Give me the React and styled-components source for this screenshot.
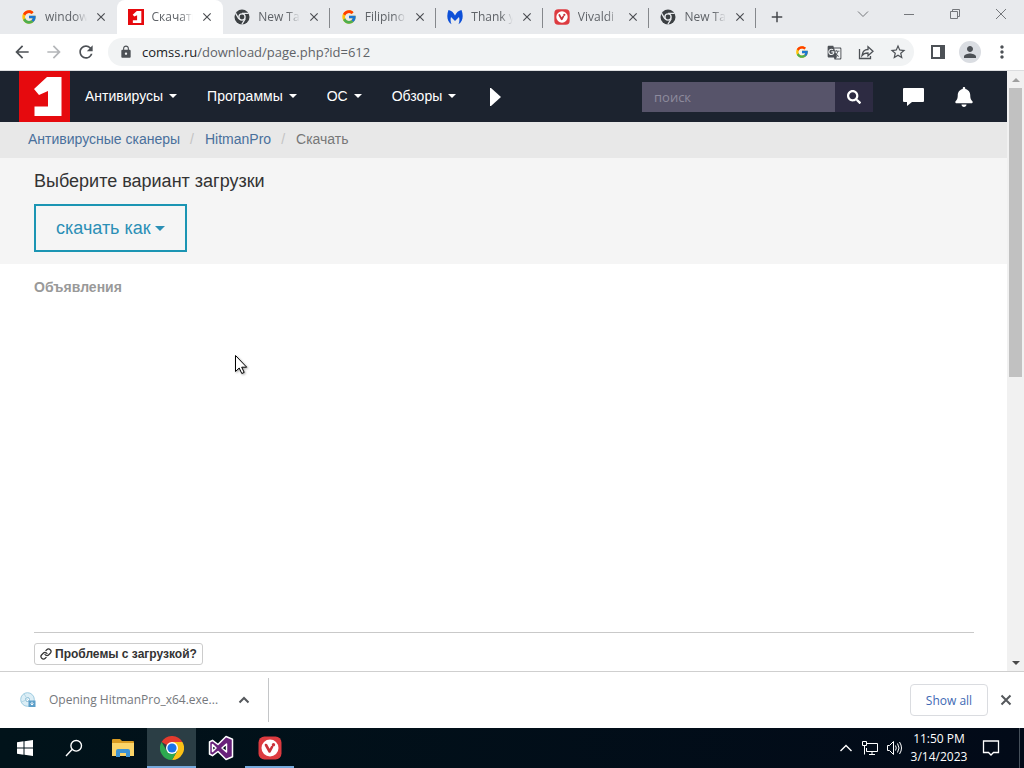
import React from "react";
import styled, { createGlobalStyle, css } from "styled-components";
import { FcGoogle } from "react-icons/fc";
import { FaSearch, FaBell } from "react-icons/fa";
import { MdLock, MdStarBorder, MdGTranslate, MdArrowBack, MdArrowForward, MdRefresh, MdPerson, MdMoreVert, MdClose, MdAdd } from "react-icons/md";
import { Link as LinkIcon } from "lucide-react";

const uiFont = `"Open Sans", "Noto Sans", sans-serif`;
const webFont = `"Liberation Sans", Arial, sans-serif`;

const GlobalStyle = createGlobalStyle`
  *, *::before, *::after { box-sizing: border-box; }
  body { margin: 0; background: #fff; font-family: ${uiFont}; }
  button, input { font: inherit; color: inherit; border: 0; padding: 0; margin: 0; background: none; border-radius: 0; }
  button { cursor: pointer; }
  a { text-decoration: none; color: inherit; }
  svg { display: block; flex: none; }
`;

const Screen = styled.div`
  display: flex;
  flex-direction: column;
  height: 100vh;
  min-height: 480px;
  position: relative;
  overflow: hidden;
`;

/* Browser chrome */
const TabStrip = styled.header`
  display: flex;
  height: 34px;
  flex: none;
  padding-left: 10px;
  background: #e8eaed;
`;

const Tabs = styled.div`
  display: grid;
  grid-template-columns: repeat(7, minmax(0, 1fr));
  flex: 0 1 746px;
`;

const TabItem = styled.div`
  display: flex;
  align-items: center;
  padding: 0 8px 0 11px;
  position: relative;
  ${(p) => p.$active && css`
    background: #fff;
    border-radius: 8px 8px 0 0;
  `}
  ${(p) => p.$divided && css`
    &::after {
      content: "";
      position: absolute;
      right: 0;
      top: 8px;
      width: 1px;
      height: 20px;
      background: #85888c;
    }
  `}
`;

const TabButton = styled.button`
  display: flex;
  align-items: center;
  gap: 8px;
  flex: 1;
  min-width: 0;
  text-align: left;
`;

const TabTitle = styled.span`
  flex: 1;
  min-width: 0;
  overflow: hidden;
  white-space: nowrap;
  font-size: 12px;
  line-height: 18px;
  color: #5f6368;
  mask-image: linear-gradient(to right, #000 70%, transparent 100%);
`;

const TabClose = styled.button`
  display: grid;
  place-items: center;
  width: 16px;
  height: 16px;
  margin-left: 6px;
  color: #4b4e52;
`;

const NewTab = styled.button`
  display: grid;
  place-items: center;
  width: 28px;
  margin-left: 7px;
  color: #45484c;
`;

const WindowControls = styled.div`
  display: flex;
  margin-left: auto;
  height: 28px;
`;

const WindowButton = styled.button`
  display: grid;
  place-items: center;
  width: 46px;
  color: #74777b;
`;

const Toolbar = styled.div`
  display: flex;
  align-items: center;
  flex: none;
  height: 37px;
  padding: 0 6px;
  background: #fff;
  border-bottom: 1px solid #dcdddf;
`;

const ToolButton = styled.button`
  display: grid;
  place-items: center;
  width: 32px;
  height: 28px;
  color: ${(p) => (p.$muted ? "#b4b6b9" : "#4d5156")};
`;

const Omnibox = styled.div`
  display: flex;
  align-items: center;
  flex: 1;
  min-width: 0;
  height: 28px;
  margin: 0 8px 0 6px;
  padding-left: 11px;
  border-radius: 14px;
  background: #f1f3f4;
`;

const Address = styled.button`
  flex: 1;
  min-width: 0;
  margin-left: 9px;
  text-align: left;
  font-size: 13px;
  line-height: 20px;
  color: #5f6368;
  white-space: nowrap;
  b { font-weight: 400; color: #202124; }
`;

const Avatar = styled.span`
  display: grid;
  place-items: center;
  width: 22px;
  height: 22px;
  border-radius: 50%;
  background: #dadde2;
`;

/* Web page */
const Viewport = styled.div`
  display: flex;
  flex: 1;
  min-height: 0;
`;

const Page = styled.div`
  display: flex;
  flex-direction: column;
  flex: 1;
  min-width: 0;
  font-family: ${webFont};
  color: #333;
  overflow: hidden;
`;

const Navbar = styled.nav`
  display: flex;
  align-items: center;
  flex: none;
  height: 51px;
  padding: 0 33px 0 19px;
  background: #1c232f;
`;

const Logo = styled.a`
  display: block;
  width: 51px;
  height: 51px;
`;

const NavButton = styled.button`
  display: flex;
  align-items: center;
  gap: 6px;
  padding: 0 15px 2px;
  font-size: 14px;
  line-height: 20px;
  color: #fff;
`;

const Caret = styled.span`
  border-top: ${(p) => p.$size || 4}px solid currentColor;
  border-left: ${(p) => p.$size || 4}px solid transparent;
  border-right: ${(p) => p.$size || 4}px solid transparent;
`;

const MoreButton = styled.button`
  margin-left: 19px;
  color: #fff;
`;

const Search = styled.form`
  display: flex;
  height: 30px;
  margin-left: auto;
`;

const SearchInput = styled.input`
  width: 193px;
  padding: 0 12px;
  background: #57546a;
  color: #fff;
  font-family: ${uiFont};
  font-size: 13px;
  outline: none;
  &::placeholder { color: #8e8b9d; opacity: 1; }
`;

const SearchButton = styled.button`
  display: grid;
  place-items: center;
  width: 38px;
  background: #2d2b42;
  color: #fff;
`;

const NavIcon = styled.button`
  margin-left: 30px;
  color: #fff;
`;

const Breadcrumbs = styled.ol`
  display: flex;
  align-items: center;
  flex: none;
  height: 36px;
  margin: 0;
  padding: 0 28px 2px;
  list-style: none;
  background: #e8e8e8;
  font-size: 14px;
  line-height: 20px;
  color: #777;
`;

const Crumb = styled.li`
  a { color: #4a709c; }
  & + &::before {
    content: "/";
    padding: 0 11px 0 10px;
    color: #c4c4c4;
  }
`;

const Hero = styled.section`
  flex: none;
  padding: 12px 34px;
  background: #f5f5f5;
`;

const HeroTitle = styled.h1`
  margin: 0 0 12px;
  font-size: 18px;
  font-weight: 400;
  line-height: 22px;
`;

const DownloadButton = styled.button`
  display: flex;
  align-items: center;
  gap: 4px;
  height: 48px;
  padding: 0 20px;
  border: 2px solid #1b95b3;
  color: #2b8fb5;
  font-size: 18px;
  line-height: 24px;
`;

const Ads = styled.section`
  flex: 1;
  min-height: 0;
  margin: 0 33px 0 34px;
  padding-top: 13px;
  border-bottom: 1px solid #c9c9c9;
`;

const AdsTitle = styled.h2`
  margin: 0;
  font-size: 14px;
  line-height: 20px;
  color: #999;
`;

const Help = styled.div`
  flex: none;
  padding: 10px 34px 6px;
`;

const HelpButton = styled.button`
  display: flex;
  align-items: center;
  gap: 3px;
  height: 22px;
  padding: 0 5px;
  border: 1px solid #ccc;
  border-radius: 3px;
  font-size: 12px;
  font-weight: 700;
  line-height: 18px;
  color: #333;
`;

const Scrollbar = styled.div`
  display: flex;
  flex-direction: column;
  align-items: center;
  width: 17px;
  background: #f1f1f1;
`;

const ScrollArrow = styled.button`
  display: grid;
  place-items: center;
  width: 17px;
  height: 17px;
  color: ${(p) => (p.$muted ? "#a0a0a0" : "#484848")};
`;

const ScrollTrack = styled.div`
  flex: 1;
  width: 13px;
`;

const ScrollThumb = styled.div`
  height: 51%;
  background: #c1c1c1;
`;

/* Download shelf */
const Shelf = styled.section`
  display: flex;
  align-items: center;
  flex: none;
  height: 57px;
  padding: 0 8px 0 20px;
  border-top: 1px solid #cfcfcf;
  background: #fff;
`;

const DownloadItem = styled.div`
  display: flex;
  align-items: center;
  height: 44px;
  padding-right: 14px;
  border-right: 1px solid #c4c6c8;
`;

const DownloadName = styled.button`
  display: flex;
  align-items: center;
  gap: 13px;
  font-size: 12px;
  line-height: 20px;
  color: #75787c;
  white-space: nowrap;
`;

const ShelfIcon = styled.button`
  display: grid;
  place-items: center;
  width: 20px;
  height: 20px;
  margin-left: 16px;
  color: #55585c;
`;

const ShowAll = styled.button`
  height: 32px;
  width: 78px;
  margin-left: auto;
  border: 1px solid #dadce0;
  border-radius: 4px;
  font-size: 12px;
  font-weight: 500;
  color: #4069b4;
`;

const ShelfClose = styled(ShelfIcon)`
  margin-left: 8px;
`;

/* Taskbar */
const Taskbar = styled.footer`
  display: flex;
  flex: none;
  height: 40px;
  background: linear-gradient(to right, #01131a, #020a18);
  color: #fff;
`;

const TaskButton = styled.button`
  display: grid;
  place-items: center;
  width: 49px;
  height: 40px;
  ${(p) => p.$running && css`box-shadow: inset 0 -2px #76a9dc;`}
  ${(p) => p.$active && css`background: #2b3e45;`}
`;

const Tray = styled.div`
  display: flex;
  align-items: center;
  margin-left: auto;
  padding-right: 4px;
`;

const TrayButton = styled.button`
  display: grid;
  place-items: center;
  width: 24px;
  height: 40px;
`;

const Clock = styled.button`
  width: 66px;
  font-size: 12px;
  line-height: 18px;
  text-align: center;
  white-space: nowrap;
`;

const Notifications = styled.button`
  display: grid;
  place-items: center;
  width: 38px;
  height: 40px;
`;

const DesktopEdge = styled.button`
  width: 1px;
  height: 40px;
  margin-left: 9px;
  background: #46505b;
`;

const Pointer = styled.svg`
  position: absolute;
  left: 235px;
  top: 355px;
  filter: drop-shadow(1px 1px 1px rgba(0, 0, 0, 0.35));
`;

function ComssLogo({ size = 16 }) {
  return (
    <svg width={size} height={size} viewBox="0 0 51 51" aria-hidden="true">
      <path fill="#e60a0e" d="M0 0h51v51H0z" />
      <path fill="#fff" d="M28 6h14.500v39h-27v-9.500H29V20l-9 4-5-6z" />
    </svg>
  );
}

function ChromeGray() {
  return (
    <svg width="16" height="16" viewBox="0 0 16 16" aria-hidden="true">
      <circle cx="8" cy="8" r="7.5" fill="#3c4043" />
      <circle cx="8" cy="8" r="3.1" fill="#3c4043" stroke="#e8eaed" strokeWidth="1.4" />
      <path d="M8 4.4h6.6M4.9 9.9L1.5 4.2M11.1 9.8l-3.3 5.7" stroke="#e8eaed" strokeWidth="1.3" />
    </svg>
  );
}

function ChromeColor() {
  return (
    <svg width="24" height="24" viewBox="0 0 24 24" aria-hidden="true">
      <path fill="#e33b2e" d="M12 12L1.6 6A12 12 0 0 1 22.4 6z" />
      <path fill="#fbc116" d="M12 6h10.4A12 12 0 0 1 12 24l5.2-9z" />
      <path fill="#2da94f" d="M12 24A12 12 0 0 1 1.6 6l5.2 9L12 18l5.2-3z" />
      <circle cx="12" cy="12" r="6" fill="#fff" />
      <circle cx="12" cy="12" r="4.6" fill="#1a73e8" />
    </svg>
  );
}

function Malwarebytes() {
  return (
    <svg width="16" height="16" viewBox="0 0 16 16" aria-hidden="true">
      <path fill="#0d50d8" d="M1.500 1C4.500 1.500 6.500 3.500 8 6.500 9.500 3.500 11.500 1.500 14.500 1 16.500 6 16.300 12 11.500 15.300c1-2.300 1.200-5 .5-7.300L8 12 4 8c-.7 2.300-.5 5 .5 7.300C-.3 12-.5 6 1.500 1z" />
    </svg>
  );
}

function Vivaldi({ size = 16 }) {
  return (
    <svg width={size} height={size} viewBox="0 0 24 24" aria-hidden="true">
      <rect x="0.500" y="0.500" width="23" height="23" rx="6" fill="#dd3b40" />
      <circle cx="12" cy="12" r="8.500" fill="#fff" />
      <path d="M8 9l3.600 6.500L14 11" fill="none" stroke="#c9323a" strokeWidth="2.600" strokeLinecap="round" strokeLinejoin="round" />
      <circle cx="15.500" cy="8.800" r="1.700" fill="#c9323a" />
    </svg>
  );
}

function VisualStudio() {
  return (
    <svg width="26" height="26" viewBox="0 0 26 26" aria-hidden="true">
      <path fill="#68217a" stroke="#fff" strokeWidth="1.500" strokeLinejoin="round" fillRule="evenodd" d="M18 1.500l6.500 2.700v17.600L18 24.500l-8-8L4.500 20.700 1.500 19V7l3-1.700L10 9.500zM18.500 9L14 13l4.500 4zM4.500 9.500v7L8 13z" />
    </svg>
  );
}

function Folder() {
  return (
    <svg width="22" height="20" viewBox="0 0 22 20" aria-hidden="true">
      <path fill="#d99b22" d="M0 2q0-1 1-1h7l2 2h11q1 0 1 1v4H0z" />
      <path fill="#fbd468" d="M0 5h22v13H0z" />
      <path fill="#3d93d3" d="M4 19v-6q0-2 2-2h10q2 0 2 2v6h-4v-4H8v4z" />
    </svg>
  );
}

function Installer() {
  return (
    <svg width="16" height="16" viewBox="0 0 16 16" aria-hidden="true">
      <circle cx="7.500" cy="7.500" r="6.800" fill="#dceef6" stroke="#9ccbe0" />
      <circle cx="7.500" cy="7.500" r="2" fill="#fff" stroke="#85b9d4" />
      <path d="M7.500 7.500L4 1.700M7.500 7.500L1.500 10" stroke="#b3d7e6" />
      <path fill="#5c9fc9" d="M8.500 8.500h7V15h-7z" />
      <path d="M12 9.800v3M10.500 11.500l1.500 1.600 1.500-1.600" stroke="#fff" fill="none" />
    </svg>
  );
}

function Glyph({ d, size = 16, weight = 1, ...rest }) {
  return (
    <svg width={size} height={size} viewBox={`0 0 ${size} ${size}`} fill="none" stroke="currentColor" strokeWidth={weight} aria-hidden="true" {...rest}>
      <path d={d} />
    </svg>
  );
}

const tabs = [
  { title: "window", icon: <FcGoogle size={16} /> },
  { title: "Скачать", icon: <ComssLogo />, active: true },
  { title: "New Tab", icon: <ChromeGray />, divided: true },
  { title: "Filipino", icon: <FcGoogle size={16} />, divided: true },
  { title: "Thank y", icon: <Malwarebytes />, divided: true },
  { title: "Vivaldi |", icon: <Vivaldi />, divided: true },
  { title: "New Tab", icon: <ChromeGray />, divided: true },
];

const menus = ["Антивирусы", "Программы", "ОС", "Обзоры"];

export default function App() {
  return (
    <>
      <GlobalStyle />
      <Screen>
        <TabStrip>
          <Tabs>
            {tabs.map((tab, i) => (
              <TabItem key={i} $active={tab.active} $divided={tab.divided}>
                <TabButton>
                  {tab.icon}
                  <TabTitle>{tab.title}</TabTitle>
                </TabButton>
                <TabClose aria-label="Close tab"><MdClose size={14} /></TabClose>
              </TabItem>
            ))}
          </Tabs>
          <NewTab aria-label="New tab"><MdAdd size={18} /></NewTab>
          <WindowControls>
            <WindowButton aria-label="Search tabs"><Glyph size={12} d="M1 3.500l5 5 5-5" /></WindowButton>
            <WindowButton aria-label="Minimize"><Glyph size={12} d="M1 6.500h10" /></WindowButton>
            <WindowButton aria-label="Restore"><Glyph size={12} d="M1.500 3.500h7v7h-7zM3.500 3.500v-2h7v7h-2" /></WindowButton>
            <WindowButton aria-label="Close"><Glyph size={12} d="M1 1l10 10M11 1L1 11" /></WindowButton>
          </WindowControls>
        </TabStrip>

        <Toolbar>
          <ToolButton aria-label="Back"><MdArrowBack size={20} /></ToolButton>
          <ToolButton aria-label="Forward" $muted><MdArrowForward size={20} /></ToolButton>
          <ToolButton aria-label="Reload"><MdRefresh size={20} /></ToolButton>
          <Omnibox>
            <MdLock size={14} color="#4d5156" />
            <Address aria-label="Address"><b>comss.ru</b>/download/page.php?id=612</Address>
            <ToolButton aria-label="Google"><FcGoogle size={14} /></ToolButton>
            <ToolButton aria-label="Translate"><MdGTranslate size={15} /></ToolButton>
            <ToolButton aria-label="Share">
              <Glyph size={16} weight={1.3} d="M1.500 5v9.500h11V12M4 11.500c.5-4 2.500-6 6-6V2.700l5 4.500-5 4.500V9c-2.500 0-4.500.5-6 2.500z" />
            </ToolButton>
            <ToolButton aria-label="Bookmark"><MdStarBorder size={18} /></ToolButton>
          </Omnibox>
          <ToolButton aria-label="Side panel">
            <svg width="14" height="14" viewBox="0 0 14 14" aria-hidden="true">
              <path d="M1 1h12v12H1z" fill="none" stroke="currentColor" strokeWidth="2" />
              <path d="M9 1h4v12H9z" fill="currentColor" />
            </svg>
          </ToolButton>
          <ToolButton aria-label="Profile"><Avatar><MdPerson size={18} /></Avatar></ToolButton>
          <ToolButton aria-label="Menu"><MdMoreVert size={20} /></ToolButton>
        </Toolbar>

        <Viewport>
          <Page>
            <Navbar>
              <Logo href="#" aria-label="Comss"><ComssLogo size={51} /></Logo>
              {menus.map((name) => (
                <NavButton key={name}>{name}<Caret /></NavButton>
              ))}
              <MoreButton aria-label="More">
                <svg width="11" height="18" viewBox="0 0 11 18" aria-hidden="true"><path fill="currentColor" d="M0 0h1l10 9-10 9H0z" /></svg>
              </MoreButton>
              <Search>
                <SearchInput aria-label="Поиск" placeholder="поиск" />
                <SearchButton type="button" aria-label="Найти"><FaSearch size={14} /></SearchButton>
              </Search>
              <NavIcon aria-label="Комментарии">
                <svg width="21" height="18" viewBox="0 0 21 18" aria-hidden="true"><path fill="currentColor" d="M1 0h19q1 0 1 1v12q0 1-1 1H9l-5 4v-4H1q-1 0-1-1V1q0-1 1-1z" /></svg>
              </NavIcon>
              <NavIcon aria-label="Уведомления"><FaBell size={20} /></NavIcon>
            </Navbar>
            <Breadcrumbs>
              <Crumb><a href="#">Антивирусные сканеры</a></Crumb>
              <Crumb><a href="#">HitmanPro</a></Crumb>
              <Crumb>Скачать</Crumb>
            </Breadcrumbs>
            <Hero>
              <HeroTitle>Выберите вариант загрузки</HeroTitle>
              <DownloadButton>скачать как<Caret $size={5} /></DownloadButton>
            </Hero>
            <Ads><AdsTitle>Объявления</AdsTitle></Ads>
            <Help>
              <HelpButton><LinkIcon size={12} strokeWidth={2.5} />Проблемы с загрузкой?</HelpButton>
            </Help>
          </Page>
          <Scrollbar>
            <ScrollArrow aria-label="Scroll up" $muted>
              <svg width="8" height="4" viewBox="0 0 8 4"><path fill="currentColor" d="M0 4l4-4 4 4z" /></svg>
            </ScrollArrow>
            <ScrollTrack><ScrollThumb /></ScrollTrack>
            <ScrollArrow aria-label="Scroll down">
              <svg width="8" height="4" viewBox="0 0 8 4"><path fill="currentColor" d="M0 0l4 4 4-4z" /></svg>
            </ScrollArrow>
          </Scrollbar>
        </Viewport>

        <Shelf>
          <DownloadItem>
            <DownloadName><Installer />Opening HitmanPro_x64.exe...</DownloadName>
            <ShelfIcon aria-label="Download options"><Glyph size={12} weight={2} d="M1.500 8.500L6 4l4.500 4.500" /></ShelfIcon>
          </DownloadItem>
          <ShowAll>Show all</ShowAll>
          <ShelfClose aria-label="Close downloads"><Glyph size={12} weight={2} d="M1.500 1.500l9 9M10.500 1.500l-9 9" /></ShelfClose>
        </Shelf>

        <Taskbar>
          <TaskButton aria-label="Start">
            <svg width="16" height="16" viewBox="0 0 16 16"><path fill="#fff" d="M0 2.300l6.500-1v6.200H0zM7.500 1.200L16 0v7.500H7.500zM0 8.500h6.500v6.200L0 13.700zM7.500 8.500H16V16l-8.500-1.200z" /></svg>
          </TaskButton>
          <TaskButton aria-label="Search">
            <Glyph size={18} weight={1.4} d="M6.800 10.800L1 17M16.500 6.800a5.300 5.300 0 1 1-10.600 0a5.300 5.300 0 1 1 10.600 0z" />
          </TaskButton>
          <TaskButton aria-label="File Explorer"><Folder /></TaskButton>
          <TaskButton aria-label="Chrome" $running $active><ChromeColor /></TaskButton>
          <TaskButton aria-label="Visual Studio"><VisualStudio /></TaskButton>
          <TaskButton aria-label="Vivaldi" $running><Vivaldi size={24} /></TaskButton>
          <Tray>
            <TrayButton aria-label="Hidden icons"><Glyph size={14} weight={1.4} d="M1.500 10L7 4.500l5.500 5.500" /></TrayButton>
            <TrayButton aria-label="Network"><Glyph size={16} d="M5 3.500h10.500v8H4.500V8M10 11.500v3M7 14.500h6M.5 1.500h4v4h-4zM2.500 5.500v9" /></TrayButton>
            <TrayButton aria-label="Volume"><Glyph size={16} d="M1.500 5.500h2l4-4v13l-4-4h-2zM9.500 5.500q1.500 2.500 0 5M11.500 3.500q3 4.500 0 9M13.500 2q4 6 0 12" /></TrayButton>
            <Clock><div>11:50 PM</div><div>3/14/2023</div></Clock>
            <Notifications aria-label="Notifications"><Glyph size={18} weight={1.3} d="M1.500 2h15v11.500h-5L9 16l-2.500-2.500h-5z" /></Notifications>
            <DesktopEdge aria-label="Show desktop" />
          </Tray>
        </Taskbar>

        <Pointer width="14" height="20" viewBox="0 0 14 20" aria-hidden="true">
          <path fill="#fff" stroke="#000" d="M.5.5v16l3.700-3.500 2.600 5.500 2.400-1.100-2.500-5.200h5z" />
        </Pointer>
      </Screen>
    </>
  );
}
